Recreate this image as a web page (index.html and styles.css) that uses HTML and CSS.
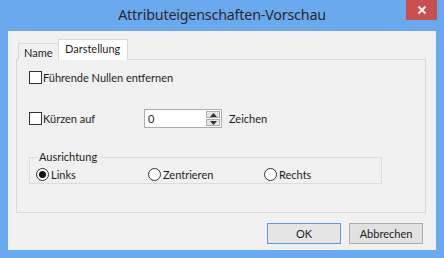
FILE: index.html
```html
<!DOCTYPE html>
<html lang="de">
<head>
<meta charset="utf-8">
<title>Attributeigenschaften-Vorschau</title>
<link rel="stylesheet" href="styles.css">
</head>
<body>
<div class="window">
  <div class="titlebar">
    <div class="title">Attributeigenschaften-Vorschau</div>
    <div class="close"><svg width="10" height="10" viewBox="0 0 10 10"><path d="M1.5 1.5 L8.5 8.5 M8.5 1.5 L1.5 8.5" stroke="#fff" stroke-width="1.8" fill="none"/></svg></div>
  </div>
  <div class="client">
    <div class="tabs">
      <div class="tab">Name</div>
      <div class="tab active">Darstellung</div>
    </div>
    <div class="panel">
      <label class="check row1"><span class="box"></span><span>Führende Nullen entfernen</span></label>
      <div class="row2">
        <label class="check short"><span class="box"></span><span>Kürzen auf</span></label>
        <div class="spin">
          <div class="spin-input">0</div>
          <div class="spin-btns">
            <div class="spin-btn"><svg width="7" height="4" viewBox="0 0 7 4"><path d="M0 4 L3.5 0 L7 4Z" fill="#333"/></svg></div>
            <div class="spin-btn"><svg width="7" height="4" viewBox="0 0 7 4"><path d="M0 0 L3.5 4 L7 0Z" fill="#333"/></svg></div>
          </div>
        </div>
        <span class="unit">Zeichen</span>
      </div>
      <fieldset class="group">
        <legend>Ausrichtung</legend>
        <div class="radios">
          <label class="radio"><span class="circle on"></span><span>Links</span></label>
          <label class="radio"><span class="circle"></span><span>Zentrieren</span></label>
          <label class="radio"><span class="circle"></span><span>Rechts</span></label>
        </div>
      </fieldset>
    </div>
    <div class="buttons">
      <div class="btn default">OK</div>
      <div class="btn">Abbrechen</div>
    </div>
  </div>
</div>
</body>
</html>
```
FILE: styles.css
```css
html, body {
  margin: 0;
  padding: 0;
  background: #6aa9ee;
}
body {
  font-family: Lato, "Noto Sans", sans-serif;
  font-size: 11px;
  color: #1e1e1e;
}
.window {
  width: 444px;
  height: 258px;
  box-sizing: border-box;
  background: #6aa9ee;
  padding: 0 8px 8px 8px;
  display: flex;
  flex-direction: column;
}
.titlebar {
  height: 31px;
  display: flex;
  justify-content: center;
  position: relative;
}
.title {
  font-family: "Noto Sans", sans-serif;
  font-size: 14.3px;
  line-height: 30px;
  color: #2a2a2a;
  letter-spacing: -0.2px;
}
.close {
  position: absolute;
  top: 0;
  right: -1px;
  width: 31px;
  height: 20px;
  background: #c7504f;
  display: flex;
  align-items: center;
  justify-content: center;
}
.client {
  flex: 1;
  background: #f0f0f0;
  padding: 8px 10px 0 8px;
  display: flex;
  flex-direction: column;
}
.tabs {
  display: flex;
  align-items: flex-end;
  height: 20px;
  padding-left: 2px;
  position: relative;
  z-index: 1;
}
.tab {
  height: 17px;
  box-sizing: border-box;
  border: 1px solid #d9d9d9;
  border-bottom: none;
  padding: 0 0 0 5px;
  line-height: 18px;
  background: #f0f0f0;
  margin-bottom: -1px;
  width: 41px;
  white-space: nowrap;
}
.tab.active {
  height: 21px;
  width: 70px;
  background: #ffffff;
  line-height: 17px;
  padding: 0 0 0 6px;
  margin-left: -1px;
}
.panel {
  height: 154px;
  box-sizing: border-box;
  border: 1px solid #d9d9d9;
  background: #f0f0f0;
  padding: 11px 0 0 12px;
  display: flex;
  flex-direction: column;
}
.check {
  display: flex;
  align-items: center;
  height: 13px;
  line-height: 13px;
}
.box {
  width: 13px;
  height: 13px;
  box-sizing: border-box;
  border: 1px solid #333;
  background: #fff;
  margin-right: 1px;
}
.row2 {
  display: flex;
  align-items: center;
  margin-top: 25px;
  height: 19px;
}
.short {
  width: 115px;
}
.spin {
  display: flex;
  height: 19px;
  width: 78px;
  box-sizing: border-box;
  border: 1px solid #abadb3;
  background: #fff;
}
.spin-input {
  flex: 1;
  line-height: 17px;
  padding-left: 3px;
}
.spin-btns {
  width: 14px;
  display: flex;
  flex-direction: column;
  gap: 1px;
  padding: 1px 1px 1px 0;
}
.spin-btn {
  flex: 1;
  background: #e6e6e6;
  border: 1px solid #acacac;
  display: flex;
  align-items: center;
  justify-content: center;
}
.unit {
  margin-left: 7px;
}
.group {
  margin: 22px 0 0 0;
  width: 353px;
  height: 34px;
  box-sizing: border-box;
  border: 1px solid #dcdcdc;
  padding: 0 0 0 6px;
  min-width: 0;
}
legend {
  padding: 0 2px 0 1px;
  margin-left: 2px;
  line-height: 14px;
}
.radios {
  display: grid;
  grid-template-columns: 112px 116px auto;
  margin-top: 4px;
}
.radio {
  display: flex;
  align-items: center;
  height: 13px;
}
.circle {
  width: 13px;
  height: 13px;
  box-sizing: border-box;
  border: 1px solid #333;
  border-radius: 50%;
  background: #fff;
  margin-right: 2px;
  display: flex;
  align-items: center;
  justify-content: center;
}
.circle.on::after {
  content: "";
  width: 7px;
  height: 7px;
  border-radius: 50%;
  background: #111;
}
.buttons {
  display: flex;
  justify-content: flex-end;
  gap: 8px;
  padding: 10px 3px 0 0;
}
.btn {
  width: 74px;
  height: 21px;
  box-sizing: border-box;
  border: 1px solid #adadad;
  background: #e1e1e1;
  text-align: center;
  line-height: 19px;
}
.btn.default {
  border-color: #5a9be0;
  background: #e5e5e5;
}
```
